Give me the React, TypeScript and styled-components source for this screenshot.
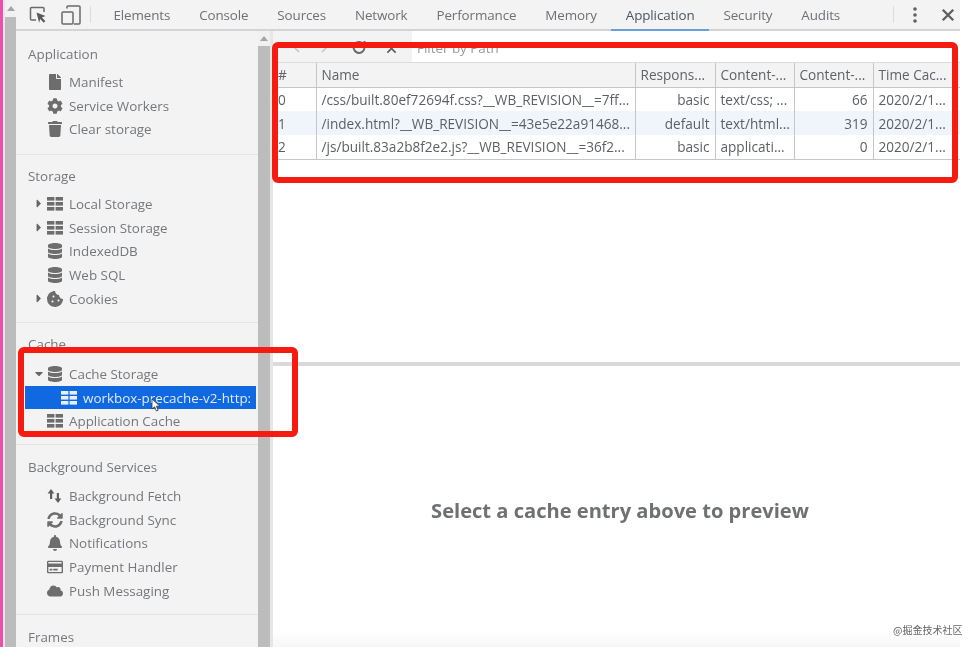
import React from 'react';
import styled, { createGlobalStyle } from 'styled-components';
import {
  FaBell,
  FaCaretDown,
  FaCaretRight,
  FaCloud,
  FaCog,
  FaCookieBite,
  FaDatabase,
  FaFile,
  FaRegCreditCard,
  FaSyncAlt,
  FaTrash,
} from 'react-icons/fa';

const GlobalStyle = createGlobalStyle`
  html, body {
    margin: 0;
    padding: 0;
    background: #fff;
    overflow: hidden;
  }
`;

const Page = styled.div`
  position: relative;
  display: flex;
  width: 975px;
  height: 647px;
  overflow: hidden;
  background: #fff;
  font-family: "Open Sans", "Liberation Sans", sans-serif;
  font-size: 13.4px;
  color: #5f6368;
  filter: blur(0.55px);
`;

const PinkEdge = styled.div`
  flex: none;
  width: 3px;
  background: #ee4fae;
`;

const OuterScroll = styled.div`
  flex: none;
  width: 13px;
  display: flex;
  flex-direction: column;
  box-sizing: border-box;
  border-left: 2px solid #e8e8e8;
  background: #bcbcbc;
`;

const ScrollCap = styled.div<{ $height: number }>`
  flex: none;
  height: ${(p) => p.$height}px;
  background: #f1f1f1;
  display: flex;
  justify-content: center;
  align-items: center;

  &::before {
    content: '';
    border-left: 4px solid transparent;
    border-right: 4px solid transparent;
    border-bottom: 5px solid #a4a4a4;
  }
`;

const Column = styled.div`
  flex: none;
  width: 944px;
  display: flex;
  flex-direction: column;
`;

const TabBar = styled.div`
  flex: none;
  height: 31px;
  box-sizing: border-box;
  display: flex;
  align-items: stretch;
  background: #f3f3f3;
  border-bottom: 2px solid #d4d4d4;
`;

const ToolIcon = styled.div<{ $width: number }>`
  flex: none;
  width: ${(p) => p.$width}px;
  display: flex;
  align-items: center;
  justify-content: center;
  color: #6a6a6a;
`;

const TabDivider = styled.div<{ $side: number }>`
  flex: none;
  width: 1px;
  margin: 6px ${(p) => p.$side}px;
  background: #dcdcdc;
`;

const Tab = styled.div<{ $active?: boolean }>`
  flex: none;
  display: flex;
  align-items: center;
  padding: 0 14.45px;
  margin-bottom: -2px;
  letter-spacing: -0.1px;
  color: ${(p) => (p.$active ? '#4a5560' : '#6d7074')};
  border-bottom: 2px solid ${(p) => (p.$active ? '#6a9fd8' : 'transparent')};
`;

const TabSpacer = styled.div`
  flex: 1;
`;

const Body = styled.div`
  flex: 1;
  min-height: 0;
  display: flex;
`;

const Sidebar = styled.div`
  flex: none;
  width: 242px;
  padding-top: 2px;
  overflow: hidden;
  background: #f3f3f3;
`;

const SideScroll = styled.div`
  flex: none;
  width: 15px;
  box-sizing: border-box;
  display: flex;
  flex-direction: column;
  background: #bcbcbc;
  border-right: 3px solid #e6e6e6;
`;

const Section = styled.div<{ $top: number; $bottom?: number; $last?: boolean }>`
  padding: ${(p) => p.$top}px 0 ${(p) => p.$bottom ?? 11}px;
  border-bottom: ${(p) => (p.$last ? 'none' : '1px solid #e4e4e4')};
`;

const SectionTitle = styled.div<{ $gap?: number }>`
  height: 22px;
  line-height: 22px;
  padding-left: 12px;
  margin-bottom: ${(p) => p.$gap ?? 5}px;
  color: #74777b;
`;

const Row = styled.div<{ $selected?: boolean }>`
  height: 23.7px;
  display: flex;
  align-items: center;
  white-space: nowrap;
  overflow: hidden;
  color: ${(p) => (p.$selected ? '#dfeafc' : '#74777b')};
  background: ${(p) => (p.$selected ? '#1069e0' : 'transparent')};
  margin: ${(p) => (p.$selected ? '0 2px 0 9px' : '0')};
  padding-left: ${(p) => (p.$selected ? 35 : 17)}px;
`;

const Caret = styled.span`
  flex: none;
  width: 12px;
  display: flex;
  justify-content: center;
  color: #666;
  font-size: 13px;
`;

const RowIcon = styled.span`
  flex: none;
  width: 18px;
  margin: 0 5px 0 1px;
  display: flex;
  justify-content: center;
  color: #6d6d6d;
  font-size: 16px;
`;

const SelectedIcon = styled(RowIcon)`
  color: #e6f0ff;
  margin: 0 5px 0 0;
`;

const Main = styled.div`
  flex: 1;
  min-width: 0;
  display: flex;
  flex-direction: column;
`;

const Toolbar = styled.div`
  flex: none;
  height: 32px;
  box-sizing: border-box;
  padding: 3px 0 0 20px;
  display: flex;
  align-items: center;
  background: #f3f3f3;
  border-bottom: 1px solid #dcdcdc;
  color: #6a6a6a;
`;

const NavButton = styled.span<{ $gap: number }>`
  flex: none;
  display: flex;
  margin-left: ${(p) => p.$gap}px;
`;

const FilterBox = styled.div`
  flex: 1;
  align-self: stretch;
  margin: -3px 0 0 15px;
  padding: 3px 0 0 5px;
  display: flex;
  align-items: center;
  background: #fff;
  color: #9a9a9a;
`;

const TablePane = styled.div`
  flex: none;
  height: 299px;
  background: #fff;
  font-size: 13.6px;
`;

const Table = styled.table`
  width: 100%;
  table-layout: fixed;
  border-collapse: collapse;
`;

const Head = styled.th`
  height: 24px;
  padding: 0 5px;
  box-sizing: border-box;
  text-align: left;
  font-weight: 400;
  background: #f3f3f3;
  color: #5f6266;
  white-space: nowrap;
  overflow: hidden;
  border-left: 1px solid #c6c6c6;
  border-bottom: 1px solid #c6c6c6;

  &:first-child {
    border-left: none;
  }
`;

const Line = styled.tr<{ $alt?: boolean }>`
  background: ${(p) => (p.$alt ? '#f0f4fb' : '#fff')};

  &:last-child td {
    border-bottom: 1px solid #c6c6c6;
  }
`;

const Cell = styled.td<{ $right?: boolean }>`
  height: 24px;
  padding: 0 5px;
  box-sizing: border-box;
  text-align: ${(p) => (p.$right ? 'right' : 'left')};
  color: #5c5f63;
  white-space: nowrap;
  overflow: hidden;
  border-left: 1px solid #c6c6c6;

  &:first-child {
    border-left: none;
  }
`;

const Splitter = styled.div`
  flex: none;
  height: 4px;
  background: #d9d9d9;
`;

const Preview = styled.div`
  flex: 1;
  padding: 8px 0 0 7px;
  display: flex;
  align-items: center;
  justify-content: center;
  background: linear-gradient(#fff 94%, #f7f7f7);
  font-size: 20.1px;
  font-weight: 700;
  color: #6e7072;
`;

const RedFrame = styled.div<{ $x: number; $y: number; $w: number; $h: number }>`
  position: absolute;
  left: ${(p) => p.$x}px;
  top: ${(p) => p.$y}px;
  width: ${(p) => p.$w}px;
  height: ${(p) => p.$h}px;
  box-sizing: border-box;
  border: 6px solid #f51b10;
  border-radius: 6px;
`;

const PointerMark = styled.svg`
  position: absolute;
  left: 151px;
  top: 398px;
`;

const Watermark = styled.div`
  position: absolute;
  left: 893px;
  top: 622px;
  font-family: "Noto Sans CJK SC", sans-serif;
  font-size: 10px;
  line-height: 16px;
  color: #666;
  white-space: nowrap;
`;

const GridIcon = ({ color = '#6d6d6d' }: { color?: string }) => (
  <svg width="16" height="14" viewBox="0 0 16 14" fill={color}>
    <rect x="0" y="0" width="7.4" height="3.6" />
    <rect x="8.6" y="0" width="7.4" height="3.6" />
    <rect x="0" y="5" width="7.4" height="3.6" />
    <rect x="8.6" y="5" width="7.4" height="3.6" />
    <rect x="0" y="10" width="7.4" height="3.6" />
    <rect x="8.6" y="10" width="7.4" height="3.6" />
  </svg>
);

const InspectIcon = () => (
  <svg width="18" height="18" viewBox="0 0 18 18" fill="none">
    <path d="M7 14H2.5a1 1 0 0 1-1-1V2.5a1 1 0 0 1 1-1H14a1 1 0 0 1 1 1V6" stroke="#6a6a6a" strokeWidth="1.5" />
    <path d="M7.5 6.5l9 3.6-3.6 1.4 3.4 3.6-1.6 1.6-3.4-3.6-1.2 3.6z" fill="#5a5a5a" />
  </svg>
);

const DeviceIcon = () => (
  <svg width="20" height="20" viewBox="0 0 20 20" fill="none" stroke="#6a6a6a" strokeWidth="1.5">
    <path d="M6 3.5V2a1 1 0 0 1 1-1h11a1 1 0 0 1 1 1v16a1 1 0 0 1-1 1H13" />
    <rect x="1" y="7" width="11" height="12" rx="1" />
  </svg>
);

const FetchIcon = () => (
  <svg width="16" height="16" viewBox="0 0 16 16" fill="#5f5f5f">
    <path d="M4 1l3.4 4.4H5.2V11H3V5.4H.6z" />
    <path d="M11 15l-3.4-4.4h2.2V5H12v5.6h2.4z" />
  </svg>
);

const ReloadIcon = () => (
  <svg width="14" height="14" viewBox="0 0 14 14" fill="none" stroke="#6a6a6a" strokeWidth="2">
    <path d="M11.5 3.5A5.4 5.4 0 1 0 12.4 7" />
    <path d="M8.5 3.8h4V0" />
  </svg>
);

const CloseIcon = ({ size, width }: { size: number; width: number }) => (
  <svg width={size} height={size} viewBox="0 0 12 12" stroke="#5f5f5f" strokeWidth={width}>
    <path d="M1.5 1.5l9 9M10.5 1.5l-9 9" />
  </svg>
);

const ChevronIcon = ({ d }: { d: string }) => (
  <svg width="8" height="10" viewBox="0 0 8 10" fill="none" stroke="#c4c4c4" strokeWidth="1.6">
    <path d={d} />
  </svg>
);

const MoreIcon = () => (
  <svg width="4" height="16" viewBox="0 0 4 16" fill="#5f5f5f">
    <circle cx="2" cy="2" r="1.8" />
    <circle cx="2" cy="8" r="1.8" />
    <circle cx="2" cy="14" r="1.8" />
  </svg>
);

const tabs = ['Elements', 'Console', 'Sources', 'Network', 'Performance', 'Memory', 'Application', 'Security', 'Audits'];

const columns = [
  { name: '#', width: 43 },
  { name: 'Name', width: 319 },
  { name: 'Respons...', width: 80 },
  { name: 'Content-...', width: 79 },
  { name: 'Content-...', width: 79 },
  { name: 'Time Cac...', width: 87 },
];

const entries = [
  ['0', '/css/built.80ef72694f.css?__WB_REVISION__=7ff...', 'basic', 'text/css; ...', '66', '2020/2/1...'],
  ['1', '/index.html?__WB_REVISION__=43e5e22a91468...', 'default', 'text/html...', '319', '2020/2/1...'],
  ['2', '/js/built.83a2b8f2e2.js?__WB_REVISION__=36f2...', 'basic', 'applicati...', '0', '2020/2/1...'],
];

const App: React.FC = () => {
  return (
    <Page>
      <GlobalStyle />
      <PinkEdge />
      <OuterScroll>
        <ScrollCap $height={17} />
      </OuterScroll>
      <Column>
        <TabBar>
          <ToolIcon $width={44}>
            <InspectIcon />
          </ToolIcon>
          <ToolIcon $width={22}>
            <DeviceIcon />
          </ToolIcon>
          <TabDivider $side={8} />
          {tabs.map((tab) => (
            <Tab key={tab} $active={tab === 'Application'}>
              {tab}
            </Tab>
          ))}
          <TabSpacer />
          <TabDivider $side={0} />
          <ToolIcon $width={42}>
            <MoreIcon />
          </ToolIcon>
          <ToolIcon $width={24}>
            <CloseIcon size={14} width={2} />
          </ToolIcon>
        </TabBar>
        <Body>
          <Sidebar>
            <Section $top={10} $bottom={13}>
              <SectionTitle>Application</SectionTitle>
              <Row>
                <Caret />
                <RowIcon><FaFile /></RowIcon>Manifest
              </Row>
              <Row>
                <Caret />
                <RowIcon><FaCog /></RowIcon>Service Workers
              </Row>
              <Row>
                <Caret />
                <RowIcon><FaTrash /></RowIcon>Clear storage
              </Row>
            </Section>
            <Section $top={10} $bottom={11.5}>
              <SectionTitle>Storage</SectionTitle>
              <Row>
                <Caret><FaCaretRight /></Caret>
                <RowIcon><GridIcon /></RowIcon>Local Storage
              </Row>
              <Row>
                <Caret><FaCaretRight /></Caret>
                <RowIcon><GridIcon /></RowIcon>Session Storage
              </Row>
              <Row>
                <Caret />
                <RowIcon><FaDatabase /></RowIcon>IndexedDB
              </Row>
              <Row>
                <Caret />
                <RowIcon><FaDatabase /></RowIcon>Web SQL
              </Row>
              <Row>
                <Caret><FaCaretRight /></Caret>
                <RowIcon><FaCookieBite /></RowIcon>Cookies
              </Row>
            </Section>
            <Section $top={10}>
              <SectionTitle $gap={7}>Cache</SectionTitle>
              <Row>
                <Caret><FaCaretDown /></Caret>
                <RowIcon><FaDatabase /></RowIcon>Cache Storage
              </Row>
              <Row $selected>
                <SelectedIcon><GridIcon color="#e6f0ff" /></SelectedIcon>workbox-precache-v2-http:
              </Row>
              <Row>
                <Caret />
                <RowIcon><GridIcon /></RowIcon>Application Cache
              </Row>
            </Section>
            <Section $top={11} $bottom={11.5}>
              <SectionTitle $gap={6}>Background Services</SectionTitle>
              <Row>
                <Caret />
                <RowIcon><FetchIcon /></RowIcon>Background Fetch
              </Row>
              <Row>
                <Caret />
                <RowIcon><FaSyncAlt /></RowIcon>Background Sync
              </Row>
              <Row>
                <Caret />
                <RowIcon><FaBell /></RowIcon>Notifications
              </Row>
              <Row>
                <Caret />
                <RowIcon><FaRegCreditCard /></RowIcon>Payment Handler
              </Row>
              <Row>
                <Caret />
                <RowIcon><FaCloud /></RowIcon>Push Messaging
              </Row>
            </Section>
            <Section $top={11} $last>
              <SectionTitle>Frames</SectionTitle>
            </Section>
          </Sidebar>
          <SideScroll>
            <ScrollCap $height={15} />
          </SideScroll>
          <Main>
            <Toolbar>
              <NavButton $gap={0}><ChevronIcon d="M6 1L2 5l4 4" /></NavButton>
              <NavButton $gap={19}><ChevronIcon d="M2 1l4 4-4 4" /></NavButton>
              <NavButton $gap={24}><ReloadIcon /></NavButton>
              <NavButton $gap={20}><CloseIcon size={11} width={1.8} /></NavButton>
              <FilterBox>Filter by Path</FilterBox>
            </Toolbar>
            <TablePane>
              <Table>
                <colgroup>
                  {columns.map((col, index) => (
                    <col key={index} width={col.width} />
                  ))}
                </colgroup>
                <thead>
                  <tr>
                    {columns.map((col, index) => (
                      <Head key={index}>{col.name}</Head>
                    ))}
                  </tr>
                </thead>
                <tbody>
                  {entries.map((entry, index) => (
                    <Line key={entry[0]} $alt={index === 1}>
                      {entry.map((value, cellIndex) => (
                        <Cell key={cellIndex} $right={cellIndex === 2 || cellIndex === 4}>
                          {value}
                        </Cell>
                      ))}
                    </Line>
                  ))}
                </tbody>
              </Table>
            </TablePane>
            <Splitter />
            <Preview>Select a cache entry above to preview</Preview>
          </Main>
        </Body>
      </Column>
      <RedFrame $x={272} $y={42} $w={686} $h={141} />
      <RedFrame $x={18} $y={347} $w={280} $h={90} />
      <PointerMark width="10" height="14" viewBox="0 0 10 14">
        <path d="M1 1v10l2.6-2.2L5.4 13l1.8-.8-1.8-4H9z" fill="#fff" stroke="#333" strokeWidth="0.8" />
      </PointerMark>
      <Watermark>@掘金技术社区</Watermark>
    </Page>
  );
};

export default App;
